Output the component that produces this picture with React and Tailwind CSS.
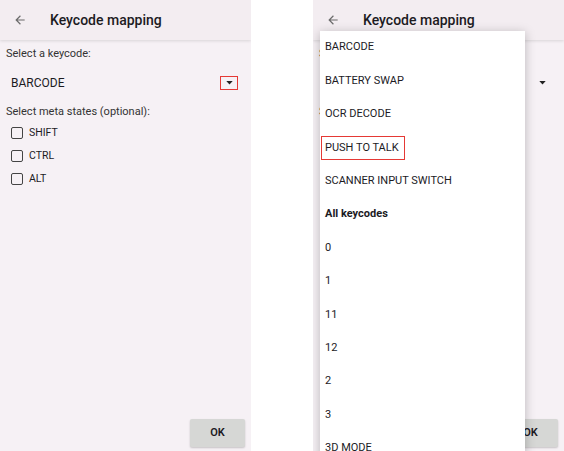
import React from 'react';

const font = { fontFamily: 'Roboto, "Noto Sans", sans-serif' };

const BackArrow = () => (
  <svg width="14" height="14" viewBox="0 0 24 24" className="text-[#6b6b6b]">
    <path d="M20 11H7.83l5.59-5.59L12 4l-8 8 8 8 1.41-1.41L7.83 13H20v-2z" fill="currentColor" />
  </svg>
);

const Caret = () => (
  <svg width="7" height="4" viewBox="0 0 8 5">
    <path d="M0 0h8L4 4.5z" fill="#222" />
  </svg>
);

const Header = () => (
  <div className="h-[40px] shrink-0 bg-[#f3edf1] shadow-[0_1px_3px_rgba(0,0,0,0.12)] flex items-center relative z-10">
    <div className="w-[50px] pl-[13px] flex items-center"><BackArrow /></div>
    <span className="text-[14px] font-medium text-[#1c1b1f]">Keycode mapping</span>
  </div>
);

const Checkbox = ({ label }) => (
  <div className="flex items-center h-[23px] pl-[11px] gap-[6px]">
    <span className="w-[12px] h-[12px] border-[1.5px] border-[#444] rounded-[2px]" />
    <span className="text-[10.5px] text-[#1c1b1f]">{label}</span>
  </div>
);

const Screen = ({ highlightCaret, children }) => (
  <div className="w-[251px] h-[451px] bg-[#f6f1f5] flex flex-col relative overflow-hidden shrink-0">
    <Header />
    <div className="flex-1 flex flex-col">
      <div className="pl-[6px] pt-[6px] text-[11px] text-[#333]">Select a keycode:</div>
      <div className="flex items-center justify-between pl-[11px] pr-[13px] h-[30px] mt-[5px]">
        <span className="text-[12px] text-[#1c1b1f]">BARCODE</span>
        <span className={`w-[18px] h-[14px] flex items-center justify-center ${highlightCaret ? 'border border-[#e53935]' : ''}`}>
          <Caret />
        </span>
      </div>
      <div className="pl-[6px] pt-[6px] text-[11px] text-[#333]">Select meta states (optional):</div>
      <div className="mt-[1px] flex flex-col">
        <Checkbox label="SHIFT" />
        <Checkbox label="CTRL" />
        <Checkbox label="ALT" />
      </div>
      <div className="flex-1" />
      <div className="flex justify-end pr-[6px] pb-[4px]">
        <button className="w-[55px] h-[28px] bg-[#d6d7d5] shadow-[0_1px_2px_rgba(0,0,0,0.2)] rounded-[2px] text-[11px] font-semibold text-[#1c1b1f]">OK</button>
      </div>
    </div>
    {children}
  </div>
);

const items = [
  { t: 'BARCODE' },
  { t: 'BATTERY SWAP' },
  { t: 'OCR DECODE' },
  { t: 'PUSH TO TALK', box: true },
  { t: 'SCANNER INPUT SWITCH' },
  { t: 'All keycodes', bold: true },
  { t: '0' },
  { t: '1' },
  { t: '11' },
  { t: '12' },
  { t: '2' },
  { t: '3' },
  { t: '3D MODE' },
];

export default function App() {
  return (
    <div className="w-[564px] h-[451px] bg-white flex overflow-hidden" style={font}>
      <Screen highlightCaret />
      <div className="w-[62px] shrink-0" />
      <Screen>
        <div className="absolute left-[7px] top-[31px] w-[205px] bg-white shadow-[0_2px_10px_rgba(0,0,0,0.25)] z-20 flex flex-col">
          {items.map((it) => (
            <div key={it.t} className="h-[33.4px] flex items-center pl-[5px]">
              <span
                className={`text-[11px] text-[#1c1b1f] ${it.bold ? 'font-bold' : ''} ${it.box ? 'border border-[#e53935] px-[3px] py-[3px] -ml-[4px] w-[84px]' : ''}`}
              >
                {it.t}
              </span>
            </div>
          ))}
        </div>
      </Screen>
    </div>
  );
}
